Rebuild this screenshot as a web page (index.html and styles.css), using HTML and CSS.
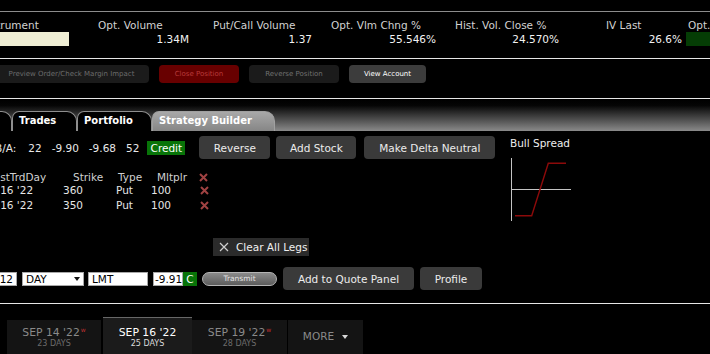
FILE: index.html
```html
<!DOCTYPE html>
<html>
<head>
<meta charset="utf-8">
<link rel="stylesheet" href="styles.css">
</head>
<body>
<div class="quote">
  <div class="qcol inst"><div class="lbl">Instrument</div><div class="inbox"></div></div>
  <div class="qcol c1"><div class="lbl">Opt. Volume</div><div class="val">1.34M</div></div>
  <div class="qcol c2"><div class="lbl">Put/Call Volume</div><div class="val">1.37</div></div>
  <div class="qcol c3"><div class="lbl">Opt. Vlm Chng %</div><div class="val">55.546%</div></div>
  <div class="qcol c4"><div class="lbl">Hist. Vol. Close %</div><div class="val">24.570%</div></div>
  <div class="qcol c5"><div class="lbl">IV Last</div><div class="val">26.6%</div></div>
  <div class="qcol c6"><div class="lbl">Opt. Implied Vol. %</div><div class="gbox"></div></div>
</div>

<div class="actions">
  <div class="abtn b-prev">Preview Order/Check Margin Impact</div>
  <div class="abtn b-close">Close Position</div>
  <div class="abtn b-rev">Reverse Position</div>
  <div class="abtn b-view">View Account</div>
</div>

<div class="tabbar">
  <div class="tab t0"></div>
  <div class="tab t1">Trades</div>
  <div class="tab t2">Portfolio</div>
  <div class="tab t3">Strategy Builder</div>
</div>

<div class="builder">
  <div class="left">
    <div class="row1">
      <span class="ba">B/A:</span>
      <span class="num first">22</span>
      <span class="num">-9.90</span>
      <span class="num">-9.68</span>
      <span class="num">52</span>
      <span class="credit">Credit</span>
      <div class="btn b-reverse">Reverse</div>
      <div class="btn b-addstock">Add Stock</div>
      <div class="btn b-delta">Make Delta Neutral</div>
    </div>

    <div class="legs">
      <div class="lh ld">LastTrdDay</div>
      <div class="lh ls">Strike</div>
      <div class="lh lt">Type</div>
      <div class="lh lm">Mltplr</div>
      <div class="lh lx"><svg class="xi" width="9" height="9" viewBox="0 0 9 9"><path d="M1 1L8 8M8 1L1 8"/></svg></div>

      <div class="lc ld">Sep 16 '22</div>
      <div class="lc">360</div>
      <div class="lc">Put</div>
      <div class="lc">100</div>
      <div class="lc lx"><svg class="xi" width="9" height="9" viewBox="0 0 9 9"><path d="M1 1L8 8M8 1L1 8"/></svg></div>

      <div class="lc ld">Sep 16 '22</div>
      <div class="lc">350</div>
      <div class="lc">Put</div>
      <div class="lc">100</div>
      <div class="lc lx"><svg class="xi" width="9" height="9" viewBox="0 0 9 9"><path d="M1 1L8 8M8 1L1 8"/></svg></div>
    </div>

    <div class="clear">
      <svg class="cx" width="10" height="10" viewBox="0 0 10 10"><path d="M1 1L9 9M9 1L1 9"/></svg>
      <span>Clear All Legs</span>
    </div>

    <div class="order">
      <div class="inp q">12</div>
      <div class="inp sel"><span>DAY</span><span class="caret"></span></div>
      <div class="inp lmt">LMT</div>
      <div class="inp px">-9.91</div>
      <div class="cbox">C</div>
      <div class="transmit">Transmit</div>
      <div class="btn b-quote">Add to Quote Panel</div>
      <div class="btn b-profile">Profile</div>
    </div>
  </div>

  <div class="chart">
    <div class="ctitle">Bull Spread</div>
    <svg class="cplot" width="70" height="70" viewBox="0 0 70 70">
      <path class="axis" d="M1.5 3V66M1 34.5H61"/>
      <path class="pl" d="M5 60.7H21.7L38.3 8.3H56"/>
    </svg>
  </div>
</div>

<div class="expiries">
  <div class="etab e1"><div class="edate">SEP 14 '22<sup class="w">w</sup></div><div class="edays">23 DAYS</div></div>
  <div class="etab e2 active"><div class="edate">SEP 16 '22</div><div class="edays">25 DAYS</div></div>
  <div class="etab e3"><div class="edate">SEP 19 '22<sup class="w">w</sup></div><div class="edays">28 DAYS</div></div>
  <div class="etab more"><span>MORE</span><span class="mcaret"></span></div>
</div>
</body>
</html>
```

FILE: styles.css
```css
* { box-sizing: border-box; margin: 0; padding: 0; }
html, body { background: #000; }
body {
  width: 710px;
  height: 354px;
  overflow: hidden;
  font-family: "DejaVu Sans", "Liberation Sans", sans-serif;
  font-size: 10.5px;
  color: #e8e8e8;
}

/* quote header */
.quote {
  margin-top: 11px;
  height: 48px;
  border-top: 1px solid #8c8c8c;
  border-bottom: 1px solid #e6e6e6;
  display: grid;
  grid-template-columns: 75px 120px 123px 124px 123px 121px 1fr;
}
.qcol { overflow: visible; white-space: nowrap; }
.lbl { margin-top: 7px; line-height: 13px; color: #d2d2d2; }
.val { line-height: 14px; text-align: right; color: #f2f2f2; padding-right: 6px; }
.inst .lbl { margin-left: -19px; }
.inbox { width: 69px; height: 14px; background: #efeed4; }
.c1 .lbl { padding-left: 23px; }
.c2 .lbl { padding-left: 18px; }
.c3 .lbl { padding-left: 13px; }
.c4 .lbl { padding-left: 13px; }
.c5 .lbl { padding-left: 41px; }
.c5 .val { padding-right: 4px; }
.c6 .lbl { padding-left: 2px; }
.gbox { height: 14px; background: #053d05; }

/* action buttons */
.actions {
  height: 40px;
  border-bottom: 1px solid #e6e6e6;
  display: flex;
  gap: 10px;
  padding-top: 6px;
}
.abtn {
  height: 18px;
  border-radius: 4px;
  font-size: 7px;
  display: flex;
  align-items: center;
  justify-content: center;
  white-space: nowrap;
}
.b-prev { width: 155px; margin-left: -6px; background: #1b1b1b; color: #6c6c6c; }
.b-close { width: 80px; background: #680000; color: #b83a3a; }
.b-rev { width: 90px; background: #1b1b1b; color: #707070; }
.b-view { width: 77px; background: #3c3c3c; color: #fff; }

/* tab bar */
.tabbar {
  height: 32px;
  padding-top: 12px;
  background: linear-gradient(#000 0%, #050505 20%, #8a8a8a 100%);
  display: flex;
  align-items: flex-end;
}
.tab {
  height: 20px;
  border: 1px solid #8e8e8e;
  border-bottom: none;
  border-radius: 7px 10px 0 0;
  background: #000;
  color: #fff;
  font-weight: bold;
  font-size: 10px;
  line-height: 18px;
  padding-left: 6px;
  white-space: nowrap;
}
.t0 { margin-left: -60px; width: 72px; }
.t1 { width: 65px; }
.t2 { width: 75px; }
.t3 { width: 123px; background: linear-gradient(#a8a8a8, #868686); border-color: #a0a0a0; }

/* builder */
.builder {
  height: 173px;
  border-bottom: 1px solid #e6e6e6;
  display: flex;
}
.left { flex: 0 0 510px; }
.row1 {
  display: flex;
  align-items: center;
  height: 23px;
  margin-top: 5px;
  white-space: nowrap;
}
.ba { margin-left: -5px; }
.num { margin-left: 10px; }
.num.first { margin-left: 12px; }
.credit {
  margin-left: 8px;
  width: 38px;
  height: 14px;
  line-height: 14px;
  text-align: center;
  background: #087408;
  color: #fff;
}
.btn {
  height: 23px;
  border-radius: 4px;
  background: #3a3a3a;
  color: #ececec;
  display: flex;
  align-items: center;
  justify-content: center;
  white-space: nowrap;
}
.b-reverse { margin-left: 14px; width: 71px; }
.b-addstock { margin-left: 6px; width: 80px; }
.b-delta { margin-left: 8px; width: 131px; }

.legs {
  margin-top: 12px;
  margin-left: -30px;
  display: grid;
  grid-template-columns: 93px 53px 35px 48px 12px;
  grid-template-rows: 12px 15px 15px;
  white-space: nowrap;
}
.lh { line-height: 12px; color: #d0d0d0; }
.lc { line-height: 15px; color: #e6e6e6; }
.lh.ld { padding-left: 18px; }
.lc.ld { padding-left: 7px; }
.lh.ls { padding-left: 10px; }
.lh.lt { padding-left: 2px; }
.lh.lm { padding-left: 6px; }
.lx { display: flex; align-items: center; }
.lc.lx { padding-left: 1px; }
.xi path { stroke: #a04242; stroke-width: 2; fill: none; }

.clear {
  margin-top: 25px;
  margin-left: 213px;
  width: 96px;
  height: 18px;
  background: #2b2b2b;
  display: flex;
  align-items: center;
  padding-left: 6px;
  gap: 7px;
  color: #f0f0f0;
  white-space: nowrap;
}
.cx path { stroke: #d0d0d0; stroke-width: 1.2; fill: none; }

.order {
  margin-top: 11px;
  height: 23px;
  display: flex;
  align-items: center;
  white-space: nowrap;
}
.inp {
  height: 14px;
  background: #fff;
  color: #000;
  border: 1px solid #a8a8a8;
  line-height: 12px;
  padding-left: 3px;
}
.q { width: 40px; margin-left: -23px; text-align: right; padding-right: 3px; }
.sel { width: 62px; margin-left: 5px; display: flex; justify-content: space-between; align-items: center; padding-right: 3px; }
.caret { width: 0; height: 0; border-left: 3px solid transparent; border-right: 3px solid transparent; border-top: 4px solid #111; }
.lmt { width: 60px; margin-left: 4px; }
.px { width: 30px; margin-left: 5px; padding-left: 1px; }
.cbox {
  width: 14px;
  height: 14px;
  line-height: 14px;
  text-align: center;
  background: #087408;
  color: #fff;
}
.transmit {
  margin-left: 5px;
  width: 75px;
  height: 14px;
  border-radius: 7px;
  border: 1px solid #b4b4b4;
  background: linear-gradient(#8a8a8a, #5c5c5c);
  color: #e4e4e4;
  font-size: 7.5px;
  line-height: 12px;
  text-align: center;
}
.b-quote { margin-left: 6px; width: 131px; }
.b-profile { margin-left: 6px; width: 62px; }

.chart { padding-top: 6px; }
.ctitle { line-height: 13px; color: #eee; white-space: nowrap; }
.cplot { display: block; margin-top: 5px; }
.axis { stroke: #c4c4c4; stroke-width: 1; fill: none; }
.pl { stroke: #8c0a0a; stroke-width: 1.4; fill: none; }

/* expiry tabs */
.expiries {
  height: 50px;
  display: flex;
  align-items: flex-end;
}
.etab {
  height: 34px;
  background: #141414;
  text-align: center;
  padding-top: 6px;
  white-space: nowrap;
}
.etab.active {
  height: 37px;
  border-top: 1px solid #686868;
  background: #1b1b1b;
  padding-top: 8px;
}
.e1 { margin-left: 7px; width: 94px; }
.e2 { margin-left: 2px; width: 89px; }
.e3 { width: 95px; }
.more {
  margin-left: 1px;
  width: 75px;
  padding-top: 10px;
  line-height: 13px;
  color: #8a8a8a;
  display: flex;
  justify-content: center;
  align-items: flex-start;
  gap: 8px;
}
.mcaret {
  margin-top: 5px;
  width: 0;
  height: 0;
  border-left: 3.5px solid transparent;
  border-right: 3.5px solid transparent;
  border-top: 4px solid #d8d8d8;
}
.edate { font-size: 10.8px; line-height: 13px; color: #8a8a8a; }
.edays { font-size: 8px; line-height: 10px; color: #6c6c6c; }
.active .edate { color: #fff; }
.active .edays { color: #dcdcdc; }
.w { font-size: 6px; color: #c03030; vertical-align: top; line-height: 8px; margin-left: 1px; }
```
